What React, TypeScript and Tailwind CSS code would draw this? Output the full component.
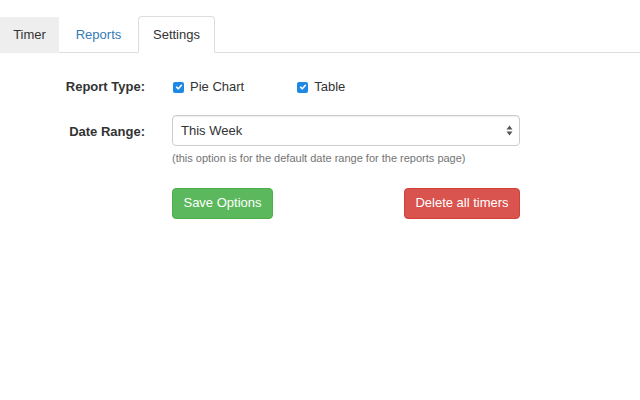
import React from "react";

function Check() {
  return (
    <span className="inline-flex h-[11px] w-[11px] items-center justify-center rounded-[2px] bg-[#1e88e5]">
      <svg width="8" height="8" viewBox="0 0 10 10">
        <path d="M2 5.2 L4.2 7.3 L8 2.8" fill="none" stroke="white" strokeWidth="1.9" strokeLinecap="round" strokeLinejoin="round" />
      </svg>
    </span>
  );
}

export default function App() {
  return (
    <div className="h-[400px] w-[640px] bg-white text-[13px] text-[#333]" style={{ fontFamily: '"Liberation Sans", Arial, sans-serif' }}>
      <div className="flex h-[53px] items-end border-b border-[#ddd]">
        <div className="mb-[-1px] flex h-[36px] w-[59px] items-center justify-center bg-[#eee] text-[#333]">Timer</div>
        <div className="mb-[-1px] flex h-[36px] w-[79px] items-center justify-center text-[#337ab7]">Reports</div>
        <div className="mb-[-1px] flex h-[37px] w-[77px] items-center justify-center rounded-t-[4px] border border-b-white border-[#ddd] bg-white text-[#333]">Settings</div>
      </div>
      <div className="flex pt-[24px]">
        <div className="w-[145px] shrink-0 text-right font-bold text-[#333]">
          <div className="h-[20px] leading-[20px]">Report Type:</div>
        </div>
        <div className="ml-[28px] flex h-[20px] items-center">
          <Check />
          <span className="ml-[6px]">Pie Chart</span>
          <span className="ml-[53px]"><Check /></span>
          <span className="ml-[6px]">Table</span>
        </div>
      </div>
      <div className="mt-[18px] flex">
        <div className="w-[145px] shrink-0 pt-[7px] text-right font-bold text-[#333]">Date Range:</div>
        <div className="ml-[27px] w-[348px]">
          <div className="flex h-[31px] items-center justify-between rounded-[4px] border border-[#ccc] bg-white pl-[8px] pr-[6px] shadow-[inset_0_1px_1px_rgba(0,0,0,0.075)]">
            <span>This Week</span>
            <svg width="7" height="11" viewBox="0 0 7 11">
              <path d="M3.5 0.5 L6.5 4.5 L0.5 4.5 Z" fill="#555" />
              <path d="M3.5 10.5 L6.5 6.5 L0.5 6.5 Z" fill="#555" />
            </svg>
          </div>
          <div className="mt-[4px] text-[11px] text-[#737373]">(this option is for the default date range for the reports page)</div>
          <div className="mt-[21px] flex justify-between">
            <button className="h-[31px] w-[101px] rounded-[4px] border border-[#4cae4c] bg-[#5cb85c] text-[13px] text-white">Save Options</button>
            <button className="h-[31px] w-[116px] rounded-[4px] border border-[#d43f3a] bg-[#d9534f] text-[13px] text-white">Delete all timers</button>
          </div>
        </div>
      </div>
    </div>
  );
}
